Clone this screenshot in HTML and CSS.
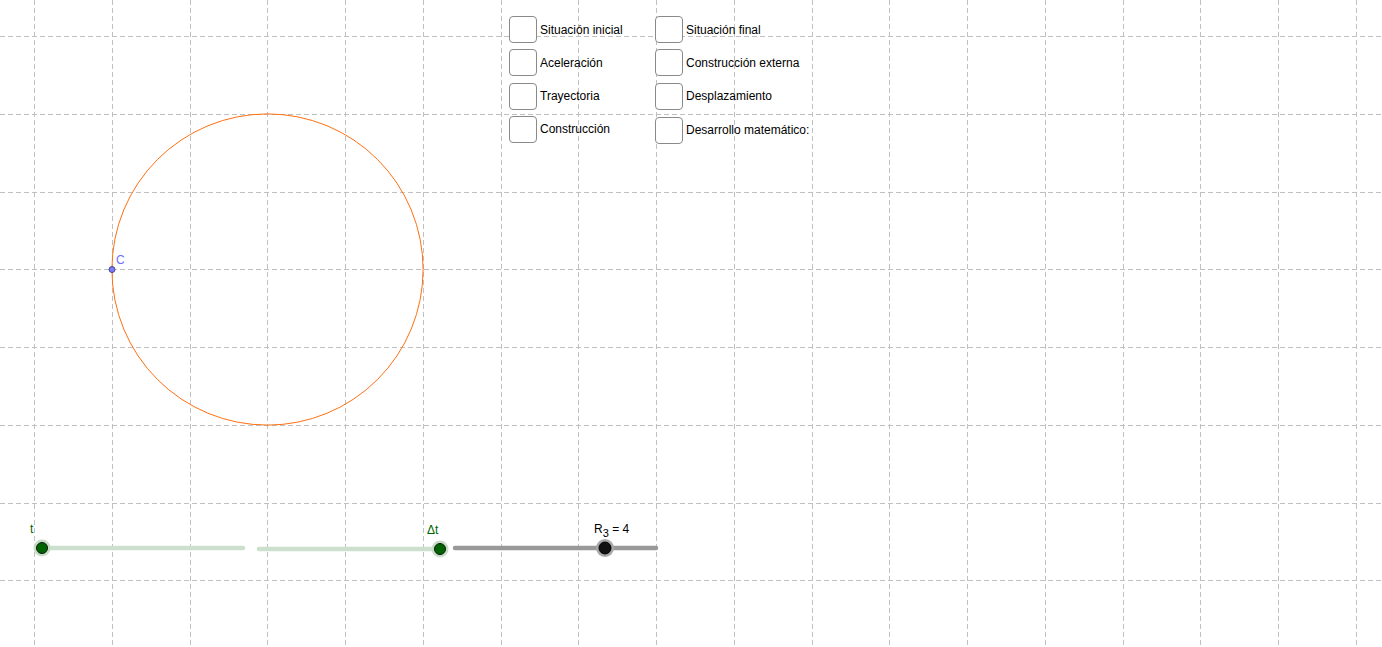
FILE: index.html
```html
<!DOCTYPE html>
<html lang="es">
<head>
<meta charset="utf-8">
<title>GeoGebra</title>
<link rel="stylesheet" href="styles.css">
</head>
<body>
<div class="applet">
  <svg class="canvas" width="1382" height="647" viewBox="0 0 1382 647" xmlns="http://www.w3.org/2000/svg">
    <g class="grid">
      <line x1="34.5" y1="0" x2="34.5" y2="647"/>
      <line x1="112.5" y1="0" x2="112.5" y2="647"/>
      <line x1="190.5" y1="0" x2="190.5" y2="647"/>
      <line x1="267.5" y1="0" x2="267.5" y2="647"/>
      <line x1="345.5" y1="0" x2="345.5" y2="647"/>
      <line x1="423.5" y1="0" x2="423.5" y2="647"/>
      <line x1="501.5" y1="0" x2="501.5" y2="647"/>
      <line x1="578.5" y1="0" x2="578.5" y2="647"/>
      <line x1="656.5" y1="0" x2="656.5" y2="647"/>
      <line x1="734.5" y1="0" x2="734.5" y2="647"/>
      <line x1="812.5" y1="0" x2="812.5" y2="647"/>
      <line x1="889.5" y1="0" x2="889.5" y2="647"/>
      <line x1="967.5" y1="0" x2="967.5" y2="647"/>
      <line x1="1045.5" y1="0" x2="1045.5" y2="647"/>
      <line x1="1123.5" y1="0" x2="1123.5" y2="647"/>
      <line x1="1200.5" y1="0" x2="1200.5" y2="647"/>
      <line x1="1278.5" y1="0" x2="1278.5" y2="647"/>
      <line x1="1356.5" y1="0" x2="1356.5" y2="647"/>
      <line x1="0" y1="36.5" x2="1382" y2="36.5"/>
      <line x1="0" y1="114.5" x2="1382" y2="114.5"/>
      <line x1="0" y1="192.5" x2="1382" y2="192.5"/>
      <line x1="0" y1="269.5" x2="1382" y2="269.5"/>
      <line x1="0" y1="347.5" x2="1382" y2="347.5"/>
      <line x1="0" y1="425.5" x2="1382" y2="425.5"/>
      <line x1="0" y1="503.5" x2="1382" y2="503.5"/>
      <line x1="0" y1="580.5" x2="1382" y2="580.5"/>
    </g>
    <circle class="orbit" cx="267.5" cy="269.5" r="155.6"/>
    <circle class="pt-c" cx="112" cy="269.5" r="3"/>
    <text class="lbl-c" x="116" y="264">C</text>

    <line class="track-green" x1="42" y1="548" x2="243" y2="548"/>
    <line class="track-green" x1="259" y1="549" x2="440" y2="549"/>
    <line class="track-gray" x1="455" y1="548" x2="656" y2="548"/>

    <circle class="halo-green" cx="42" cy="548" r="8.5"/>
    <circle class="dot-green" cx="42" cy="548" r="5.5"/>
    <circle class="halo-green" cx="440" cy="549" r="8.5"/>
    <circle class="dot-green" cx="440" cy="549" r="5.5"/>
    <circle class="halo-gray" cx="605" cy="548" r="9"/>
    <circle class="dot-black" cx="605" cy="548" r="6"/>

    <text class="lbl-green" x="30" y="533">t</text>
    <text class="lbl-green" x="427" y="534">Δt</text>
    <text class="lbl-black" x="594" y="533">R<tspan class="sub" dy="4">3</tspan><tspan dy="-4"> = 4</tspan></text>
  </svg>

  <div class="checks">
    <label class="check"><span class="box"></span><span class="txt">Situación inicial</span></label>
    <label class="check"><span class="box"></span><span class="txt">Situación final</span></label>
    <label class="check"><span class="box"></span><span class="txt">Aceleración</span></label>
    <label class="check"><span class="box"></span><span class="txt">Construcción externa</span></label>
    <label class="check"><span class="box"></span><span class="txt">Trayectoria</span></label>
    <label class="check"><span class="box"></span><span class="txt">Desplazamiento</span></label>
    <label class="check"><span class="box"></span><span class="txt">Construcción</span></label>
    <label class="check check-low"><span class="box"></span><span class="txt">Desarrollo matemático:</span></label>
  </div>
</div>
</body>
</html>
```
FILE: styles.css
```css
html, body {
  margin: 0;
  padding: 0;
  background: #ffffff;
  overflow: hidden;
}

.applet {
  position: relative;
  width: 1382px;
  height: 647px;
  font-family: "Liberation Sans", Arial, sans-serif;
}

.canvas {
  display: block;
}

.grid line {
  stroke: #c0c0c0;
  stroke-width: 1;
  stroke-dasharray: 5 3;
}

.orbit {
  fill: none;
  stroke: #ff7010;
  stroke-width: 1;
}

.pt-c {
  fill: #7b7bff;
  stroke: #333366;
  stroke-width: 0.8;
}

.lbl-c {
  font-family: "Liberation Sans", Arial, sans-serif;
  font-size: 12px;
  fill: #6d6dff;
}

.track-green {
  stroke: #cde0cd;
  stroke-width: 4.5;
  stroke-linecap: round;
}

.track-gray {
  stroke: #999999;
  stroke-width: 4.5;
  stroke-linecap: round;
}

.halo-green {
  fill: #c8dcc8;
}

.dot-green {
  fill: #006400;
  stroke: #0a1a0a;
  stroke-width: 1;
}

.halo-gray {
  fill: #a8a8a8;
}

.dot-black {
  fill: #111111;
  stroke: #000000;
  stroke-width: 1;
}

.lbl-green {
  font-family: "Liberation Sans", Arial, sans-serif;
  font-size: 12px;
  fill: #006400;
}

.lbl-black {
  font-family: "Liberation Sans", Arial, sans-serif;
  font-size: 12px;
  fill: #000000;
}

.sub {
  font-size: 11px;
}

.checks {
  position: absolute;
  left: 509px;
  top: 16px;
  display: grid;
  grid-template-columns: 146px auto;
  row-gap: 6.3px;
}

.check {
  display: flex;
  align-items: center;
  height: 27px;
  gap: 3px;
}

.check-low {
  margin-top: 1px;
}

.box {
  box-sizing: border-box;
  width: 28px;
  height: 27px;
  border: 1.5px solid #8a8a8a;
  border-radius: 4px;
  background: #ffffff;
  flex: none;
}

.txt {
  font-size: 12px;
  color: #000000;
  white-space: nowrap;
}
```
